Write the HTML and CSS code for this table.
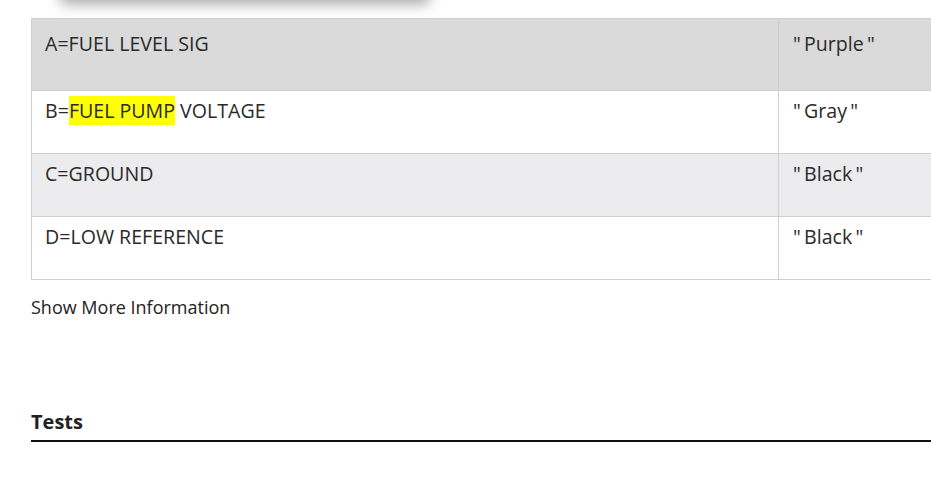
FILE: index.html
```html
<!DOCTYPE html>
<html>
<head>
<meta charset="utf-8">
<link rel="stylesheet" href="styles.css">
</head>
<body>
<div class="popup-shadow"></div>
<main class="content">
  <table class="pins">
    <tr class="row row-first">
      <td class="c1">A=FUEL LEVEL SIG</td>
      <td class="c2">"&thinsp;Purple&thinsp;"</td>
    </tr>
    <tr class="row">
      <td class="c1">B=<mark class="hl">FUEL PUMP</mark> VOLTAGE</td>
      <td class="c2">"&thinsp;Gray&thinsp;"</td>
    </tr>
    <tr class="row row-alt">
      <td class="c1">C=GROUND</td>
      <td class="c2">"&thinsp;Black&thinsp;"</td>
    </tr>
    <tr class="row">
      <td class="c1">D=LOW REFERENCE</td>
      <td class="c2">"&thinsp;Black&thinsp;"</td>
    </tr>
  </table>
  <div class="more">Show More Information</div>
  <h2 class="section">Tests</h2>
</main>
</body>
</html>
```
FILE: styles.css
```css
html, body {
  margin: 0;
  padding: 0;
  overflow: hidden;
  background: #fff;
}
body {
  font-family: "Open Sans", "Liberation Sans", sans-serif;
  color: #222;
  width: 931px;
  height: 484px;
  position: relative;
}
.popup-shadow {
  position: absolute;
  left: 60px;
  top: -40px;
  width: 370px;
  height: 40px;
  background: #fff;
  box-shadow: 0 4px 14px rgba(0,0,0,0.35);
  border-radius: 6px;
}
.content {
  padding: 18px 0 0 31px;
}
.pins {
  border-collapse: collapse;
  width: 1000px;
  font-size: 19.6px;
  font-weight: 400;
  color: #2a2a2a;
  line-height: 22px;
}
.pins td {
  border: 1px solid #cfcfcf;
  padding: 9px 14px 31px 13px;
  vertical-align: top;
}
.pins .c1 { width: 719px; }
.pins .c2 { padding-left: 14px; }
.row-first td {
  background: #dadada;
  padding-top: 14px;
  padding-bottom: 35px;
}
.row-alt td { background: #ececee; }
.hl {
  background: #ffff00;
  color: #2a2a2a;
  padding: 1px 0;
}
.more {
  margin-top: 15px;
  font-size: 18px;
  line-height: 24px;
}
.section {
  margin: 90px 0 0 0;
  font-size: 20px;
  font-weight: 700;
  line-height: 26px;
  padding-bottom: 5px;
  border-bottom: 2px solid #111;
}
```
